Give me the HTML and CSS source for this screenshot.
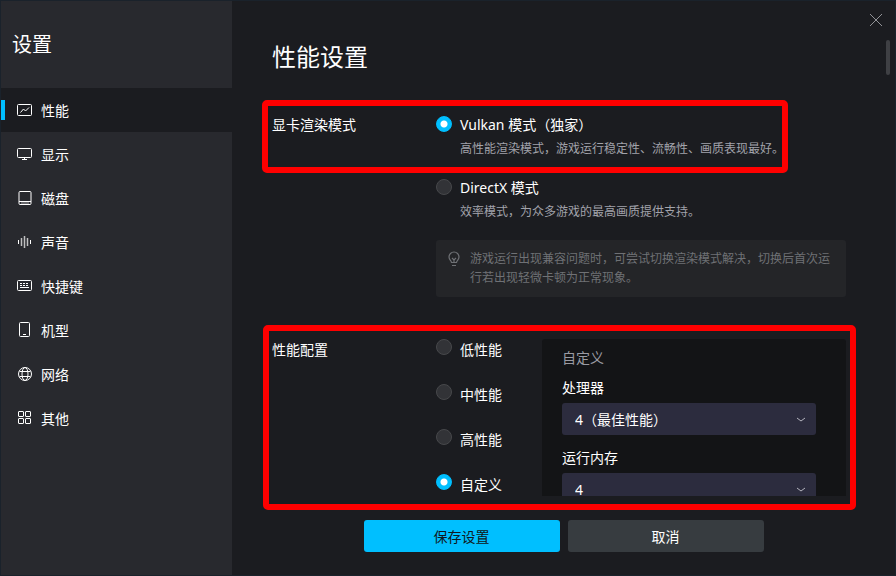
FILE: index.html
```html
<!DOCTYPE html>
<html lang="zh-CN">
<head>
  <meta charset="UTF-8">
  <meta name="viewport" content="width=device-width, initial-scale=1">
  <title>设置</title>
  <link rel="stylesheet" href="styles.css">
</head>
<body>
  <div class="window">
    <aside class="sidebar">
      <h2>设置</h2>
      <nav>
        <a href="#performance" class="active">
          <svg viewBox="0 0 16 16"><rect x="1.5" y="2.5" width="14" height="11" rx="1"/><path d="M4.500 10.500l3-3.500 2 2 3.500-3.500"/></svg>
          <span>性能</span>
        </a>
        <a href="#display">
          <svg viewBox="0 0 16 16"><rect x="1.5" y="2.5" width="14" height="9" rx="1"/><path d="M8.5 11.5v2M6 13.5h5"/></svg>
          <span>显示</span>
        </a>
        <a href="#disk">
          <svg viewBox="0 0 16 16"><rect x="3" y="1.5" width="12" height="13" rx="1"/><path d="M3 11.500h12"/><path d="M5 13h8" stroke-width=".6"/></svg>
          <span>磁盘</span>
        </a>
        <a href="#sound">
          <svg viewBox="0 0 16 16"><path d="M2.500 6v4M14.500 6v4"/><path d="M5.500 4v8M11.500 4v8M8.500 2v12" stroke-width="1.500" opacity=".7"/></svg>
          <span>声音</span>
        </a>
        <a href="#keys">
          <svg viewBox="0 0 16 16"><rect x="1.5" y="2.500" width="14" height="10" rx="1"/><path d="M4 5.500h9M4 7.500h9" stroke-dasharray="2 1"/><path d="M4 9.500h9"/></svg>
          <span>快捷键</span>
        </a>
        <a href="#model">
          <svg viewBox="0 0 16 16"><rect x="3.5" y="0.5" width="10" height="14" rx="1"/><path d="M7 12.500h3"/></svg>
          <span>机型</span>
        </a>
        <a href="#network">
          <svg viewBox="0 0 16 16"><circle cx="9" cy="8" r="6.5"/><ellipse cx="9" cy="8" rx="3" ry="6.5"/><path d="M3.500 5.500h11M3.500 10.500h11"/></svg>
          <span>网络</span>
        </a>
        <a href="#other">
          <svg viewBox="0 0 16 16"><rect x="2.5" y="1.5" width="5" height="5" rx=".5"/><rect x="9.5" y="1.5" width="5" height="5" rx=".5"/><rect x="2.5" y="8.5" width="5" height="5" rx=".5"/><rect x="9.5" y="8.5" width="5" height="5" rx=".5"/></svg>
          <span>其他</span>
        </a>
      </nav>
    </aside>

    <main class="main">
      <div class="content">
        <h1>性能设置</h1>

        <section class="setting" id="performance">
          <h3>显卡渲染模式</h3>
          <div>
            <div class="option described">
              <input type="radio" name="render" id="vulkan" checked>
              <label for="vulkan">Vulkan 模式（独家）</label>
              <p>高性能渲染模式，游戏运行稳定性、流畅性、画质表现最好。</p>
            </div>
            <div class="option described">
              <input type="radio" name="render" id="directx">
              <label for="directx">DirectX 模式</label>
              <p>效率模式，为众多游戏的最高画质提供支持。</p>
            </div>
            <div class="note">
              <svg viewBox="0 0 16 16"><path d="M5.500 11.500c0-1.500-2.500-2.500-2.500-5.500a5 5 0 0 1 10 0c0 3-2.500 4-2.500 5.500zM6 14.500h4M6 7l2 2 2-2M8 9v2.500"/></svg>
              <p>游戏运行出现兼容问题时，可尝试切换渲染模式解决，切换后首次运行若出现轻微卡顿为正常现象。</p>
            </div>
          </div>
        </section>

        <section class="setting">
          <h3>性能配置</h3>
          <div class="profile">
            <div class="levels">
              <div class="option">
                <input type="radio" name="level" id="low">
                <label for="low">低性能</label>
              </div>
              <div class="option">
                <input type="radio" name="level" id="middle">
                <label for="middle">中性能</label>
              </div>
              <div class="option">
                <input type="radio" name="level" id="high">
                <label for="high">高性能</label>
              </div>
              <div class="option">
                <input type="radio" name="level" id="custom" checked>
                <label for="custom">自定义</label>
              </div>
            </div>
            <div class="panel">
              <h4>自定义</h4>
              <label for="cpu">处理器</label>
              <div class="select">
                <select id="cpu">
                  <option>4（最佳性能）</option>
                </select>
                <svg viewBox="0 0 10 6"><path d="M1 1l4 3 4-3"/></svg>
              </div>
              <label for="memory">运行内存</label>
              <div class="select">
                <select id="memory">
                  <option>4</option>
                </select>
                <svg viewBox="0 0 10 6"><path d="M1 1l4 3 4-3"/></svg>
              </div>
            </div>
          </div>
        </section>
      </div>

      <footer class="actions">
        <button type="button" class="save">保存设置</button>
        <button type="button">取消</button>
      </footer>

      <button type="button" class="close" aria-label="关闭">
        <svg viewBox="0 0 12 12"><path d="M0 0l12 12M12 0L0 12"/></svg>
      </button>
      <div class="thumb"></div>
      <div class="mark mark-render"></div>
      <div class="mark mark-profile"></div>
    </main>
  </div>
</body>
</html>
```
FILE: styles.css
```css
* {
  box-sizing: border-box;
}
body {
  margin: 0;
  background: #1b1c20;
  color: #fff;
  font: 14px/22px "Noto Sans", "Noto Sans CJK SC", sans-serif;
}
h1, h2, h3, h4, p {
  margin: 0;
  font-weight: normal;
}
svg {
  fill: none;
  stroke: currentColor;
}
.window {
  display: flex;
  height: 100vh;
  border: 1px solid #1a222b;
}

/* sidebar */
.sidebar {
  flex: none;
  width: 231px;
  background: #28292e;
}
.sidebar h2 {
  padding: 29px 11px 28px;
  font-size: 20px;
  line-height: 30px;
}
.sidebar a {
  display: flex;
  align-items: center;
  gap: 9px;
  height: 44px;
  padding-left: 15px;
  color: #fff;
  text-decoration: none;
}
.sidebar a svg {
  width: 16px;
  height: 16px;
}
.sidebar a span {
  padding-top: 2px;
}
.sidebar .active {
  position: relative;
  background: #1b1c20;
}
.active::before {
  content: "";
  position: absolute;
  left: 0;
  top: 12px;
  width: 4px;
  height: 20px;
  background: #00bfff;
}

/* settings */
.main {
  position: relative;
  display: flex;
  flex: 1;
  flex-direction: column;
  min-width: 0;
}
.content {
  flex: 1;
  min-height: 0;
  padding: 40px 49px 0 40px;
  overflow-y: auto;
  scrollbar-width: none;
}
h1 {
  margin-bottom: 41px;
  font-size: 24px;
  line-height: 32px;
}
h3, h4 {
  font-size: 14px;
}
.setting {
  display: grid;
  grid-template-columns: 164px 1fr;
  margin-bottom: 42px;
}
.option {
  display: grid;
  grid-template-columns: 16px 1fr;
  column-gap: 8px;
  margin-bottom: 23px;
}
.option input {
  appearance: none;
  width: 16px;
  height: 16px;
  margin: 0;
  border: 1px solid #47484b;
  border-radius: 50%;
  background: #323337;
}
.option input:checked {
  border-color: #00bfff;
  background: radial-gradient(circle, #fff 3px, #00bfff 4px);
}
.described {
  margin-bottom: 18px;
}
.described input {
  margin-top: 2px;
}
.option p {
  grid-column: 2;
  margin-top: 3px;
  color: #a2a3ab;
  font-size: 12px;
  line-height: 20px;
}
.note {
  display: flex;
  gap: 8px;
  padding: 9px 12px 10px 10px;
  border-radius: 3px;
  background: #242528;
  color: #6f7175;
  font-size: 12px;
  line-height: 19px;
}
.note svg {
  flex: none;
  width: 16px;
  height: 16px;
  margin-top: 2px;
  stroke-width: 1.2;
}
.profile {
  display: flex;
}
.levels {
  width: 106px;
}
.panel {
  flex: 1;
  padding: 8px 30px 20px 20px;
  border-radius: 3px;
  background: #131416;
}
.panel h4 {
  margin-bottom: 8px;
  color: #9a9ba3;
}
.panel label {
  display: block;
}
.select {
  position: relative;
  margin: 4px 0 12px;
}
.select select {
  appearance: none;
  display: block;
  width: 100%;
  height: 32px;
  padding: 2px 13px 0;
  border: 0;
  border-radius: 3px;
  background: #2c2c3e;
  color: #fff;
  font: inherit;
}
.select svg {
  position: absolute;
  top: 14px;
  right: 10px;
  width: 10px;
  height: 6px;
  color: #b4b4be;
}

/* bottom buttons */
.actions {
  display: flex;
  justify-content: center;
  gap: 8px;
  padding: 24px 0 23px;
}
.actions button {
  width: 196px;
  height: 32px;
  padding: 2px 0 0;
  border: 0;
  border-radius: 3px;
  background: #373c40;
  color: #fff;
  font: inherit;
}
.actions .save {
  background: #00bfff;
  color: #101820;
}
.close {
  position: absolute;
  top: 13px;
  right: 13px;
  padding: 0;
  border: 0;
  background: none;
  color: #929397;
}
.close svg {
  display: block;
  width: 12px;
  height: 12px;
}
.thumb {
  position: absolute;
  top: 39px;
  right: 5px;
  width: 4px;
  height: 35px;
  border-radius: 2px;
  background: #3f4044;
}

/* red frames over the settings */
.mark {
  position: absolute;
  border: 6px solid #f00;
  border-radius: 5px;
  pointer-events: none;
}
.mark-render {
  top: 99px;
  left: 30px;
  width: 526px;
  height: 73px;
}
.mark-profile {
  top: 324px;
  left: 31px;
  width: 593px;
  height: 185px;
}
```
